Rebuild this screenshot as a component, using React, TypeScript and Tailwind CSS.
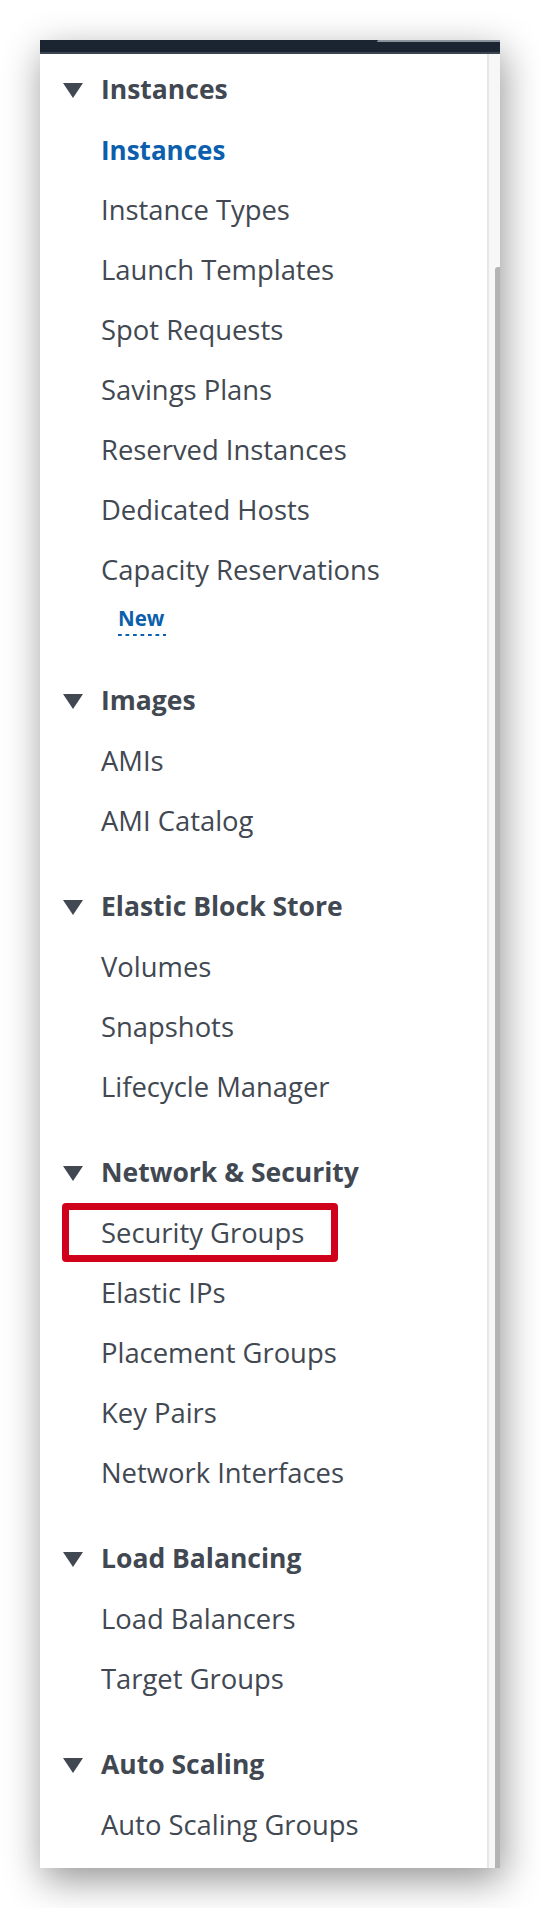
import React from "react";

const sections = [
  {
    title: "Instances",
    items: [
      "Instances",
      "Instance Types",
      "Launch Templates",
      "Spot Requests",
      "Savings Plans",
      "Reserved Instances",
      "Dedicated Hosts",
      "Capacity Reservations",
    ],
  },
  { title: "Images", items: ["AMIs", "AMI Catalog"] },
  { title: "Elastic Block Store", items: ["Volumes", "Snapshots", "Lifecycle Manager"] },
  {
    title: "Network & Security",
    items: ["Security Groups", "Elastic IPs", "Placement Groups", "Key Pairs", "Network Interfaces"],
  },
  { title: "Load Balancing", items: ["Load Balancers", "Target Groups"] },
  { title: "Auto Scaling", items: ["Auto Scaling Groups"] },
];

function Caret() {
  return (
    <svg width="20" height="15" viewBox="0 0 20 15" className="shrink-0">
      <path d="M0 0 H20 L10 15 Z" fill="#414852" />
    </svg>
  );
}

function Item({ label, active, boxed }: { label: string; active?: boolean; boxed?: boolean }) {
  return (
    <div className="relative h-[60px] flex items-center pl-[61px]">
      <span
        className={
          active
            ? "text-[26px] font-bold text-[#0b5fad]"
            : "text-[27.4px] text-[#414852]"
        }
      >
        {label}
      </span>
      {boxed && (
        <div className="absolute left-[22px] top-[0px] w-[276px] h-[59px] border-[7px] border-[#d0021b] rounded-[4px]" />
      )}
    </div>
  );
}

export default function App() {
  return (
    <div
      className="min-h-[1908px] bg-white pt-[40px] pl-[40px]"
      style={{ fontFamily: '"Open Sans", "Noto Sans", sans-serif' }}
    >
      <div className="w-[460px] h-[1828px] flex flex-col bg-white shadow-[3px_12px_36px_rgba(0,0,0,0.42)]">
        <div className="h-[14px] flex bg-[#1b2532] border-b-2 border-[#3c4652]">
          <div className="flex-1" />
          <div className="w-[123px] h-[2px] bg-[#8b949c] rounded-tl-[3px]" />
        </div>

        <div className="flex flex-1 min-h-0">
          <nav className="flex-1 pt-[6px]">
            {sections.map((s, si) => (
              <div key={s.title} className={si > 0 ? "mt-[26px]" : ""}>
                <div className="h-[60px] flex items-center gap-[18px] pl-[23px]">
                  <Caret />
                  <span className="text-[26.5px] font-bold text-[#414852]">{s.title}</span>
                </div>
                {s.items.map((it) => (
                  <Item
                    key={it}
                    label={it}
                    active={si === 0 && it === "Instances"}
                    boxed={it === "Security Groups"}
                  />
                ))}
                {s.title === "Instances" && (
                  <div className="pl-[78px] pt-[6px] pb-[9px]">
                    <div className="text-[20.5px] leading-[24px] font-bold text-[#0b5fad]">New</div>
                    <div className="mt-[4px] w-[48px] h-[2px] bg-[linear-gradient(to_right,#0b5fad_55%,transparent_55%)] bg-[length:7.5px_2px] bg-repeat-x" />
                  </div>
                )}
              </div>
            ))}
          </nav>

          <div className="w-[13px] flex flex-col border-l-2 border-[#e6e6e6] bg-[#f7f7f7]">
            <div className="h-[213px]" />
            <div className="flex-1 ml-[6px] bg-[#b4b4b4] rounded-tl-[3px]" />
          </div>
        </div>
      </div>
    </div>
  );
}
